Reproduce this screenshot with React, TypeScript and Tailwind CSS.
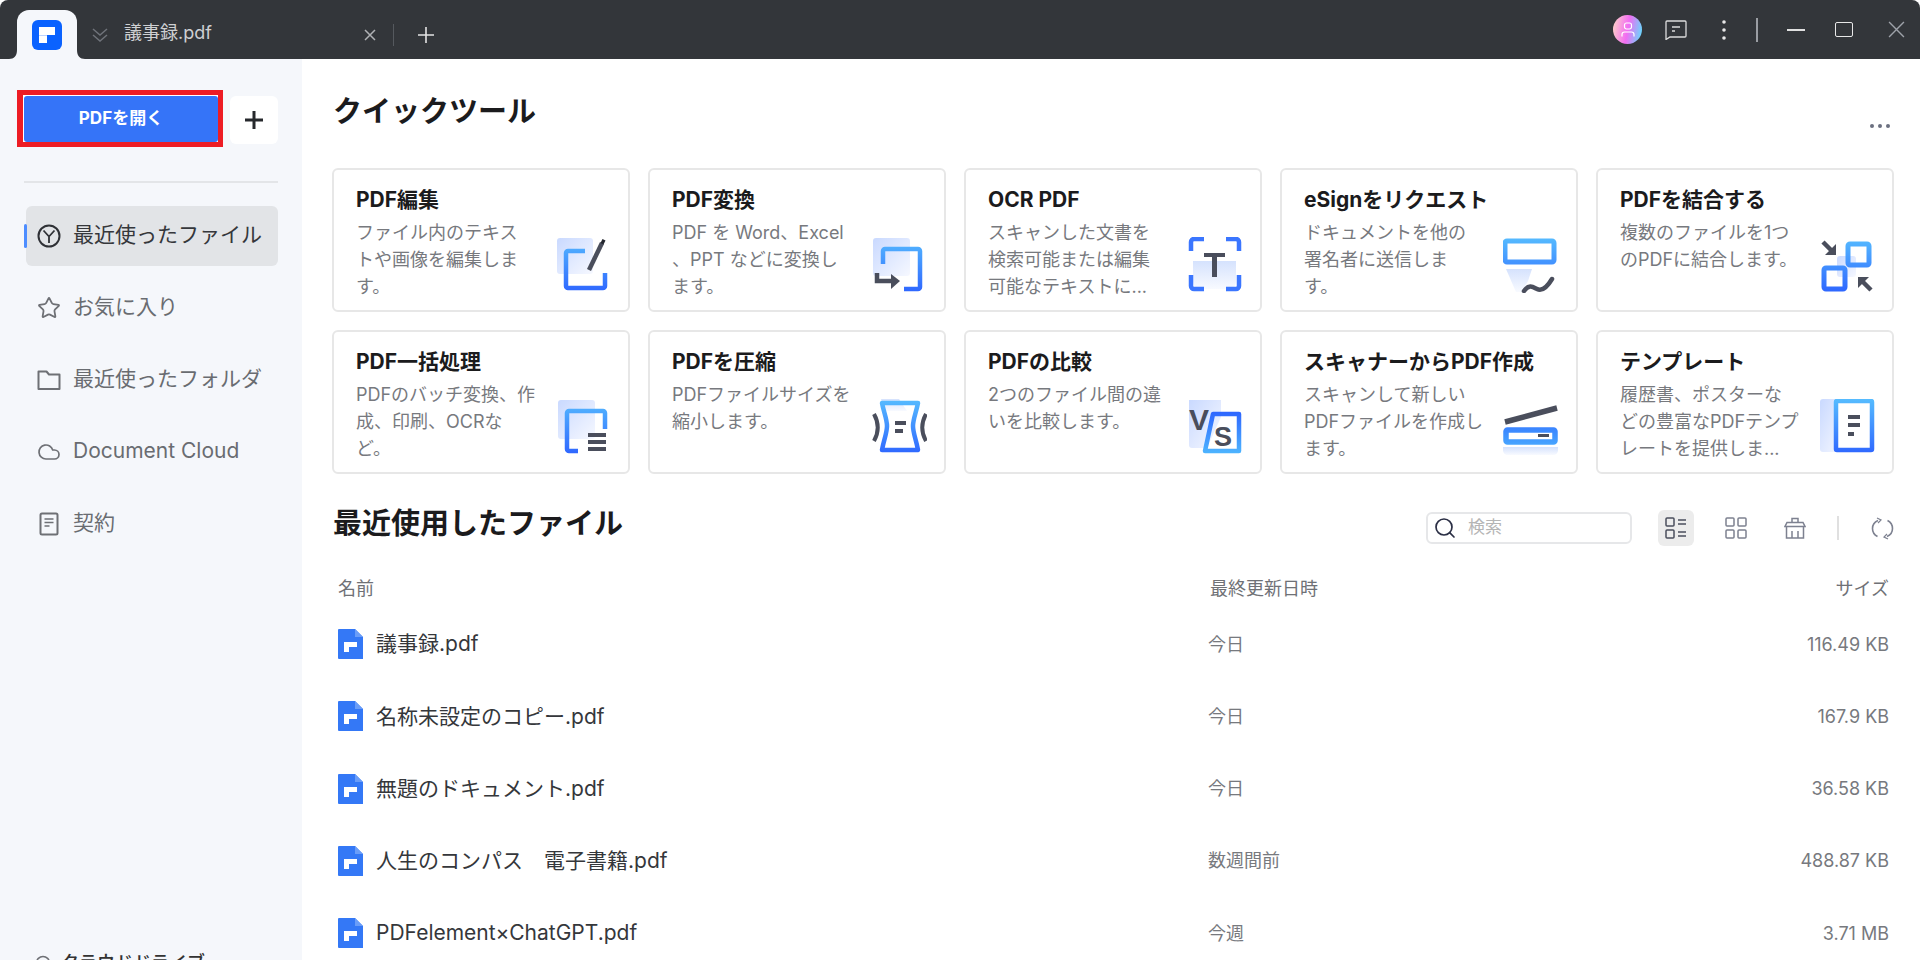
import { Star, Cloud, Search } from 'lucide-react';
import type { ReactNode } from 'react';

// shared gradients for the tool icons
function Defs() {
  return (
    <svg width="0" height="0" className="absolute">
      <defs>
        <linearGradient id="pale" x1="0" y1="0" x2="1" y2="1">
          <stop offset="0" stopColor="#c9d9ff" />
          <stop offset="1" stopColor="#f6f8ff" />
        </linearGradient>
        <linearGradient id="paleDown" x1="0" y1="0" x2="0" y2="1">
          <stop offset="0" stopColor="#d5e2fd" />
          <stop offset="1" stopColor="#f8faff" />
        </linearGradient>
        <linearGradient id="blue" gradientUnits="userSpaceOnUse" x1="0" y1="0" x2="0" y2="54">
          <stop offset="0" stopColor="#56bcff" />
          <stop offset="1" stopColor="#2f68ff" />
        </linearGradient>
        <linearGradient id="blueUp" gradientUnits="userSpaceOnUse" x1="0" y1="54" x2="0" y2="14">
          <stop offset="0" stopColor="#4db4ff" />
          <stop offset="1" stopColor="#2f68ff" />
        </linearGradient>
      </defs>
    </svg>
  );
}

const dark = '#4a4e5c';

const toolIcons: Record<string, ReactNode> = {
  edit: (
    <>
      <rect x="2" y="1" width="36" height="36" rx="3" fill="url(#pale)" />
      <path d="M30 14H13a2 2 0 0 0-2 2v33a2 2 0 0 0 2 2h35a2 2 0 0 0 2-2V36" fill="none" stroke="url(#blue)" strokeWidth="4.500" />
      <path d="M34 33l13-27" stroke={dark} strokeWidth="4.500" />
      <path d="M45.500 6l2-4 3 1.500-2 4z" fill="#23262f" />
    </>
  ),
  convert: (
    <>
      <rect x="2" y="1" width="37" height="38" rx="3" fill="url(#pale)" />
      <path d="M12 27V14a2 2 0 0 1 2-2h33a2 2 0 0 1 2 2v36a2 2 0 0 1-2 2H33" fill="none" stroke="url(#blue)" strokeWidth="4.500" />
      <path d="M6 36v8h17" fill="none" stroke={dark} strokeWidth="4.500" />
      <path d="M20 37l9 7-9 8z" fill={dark} />
    </>
  ),
  ocr: (
    <>
      <path d="M6 24h43v20c0 5-3 8-8 8H14c-5 0-8-3-8-8z" fill="url(#paleDown)" />
      <path d="M17 2H7a3 3 0 0 0-3 3v9M39 2h10a3 3 0 0 1 3 3v9M4 38v11a3 3 0 0 0 3 3h10M52 38v11a3 3 0 0 1-3 3H39" fill="none" stroke="#3b76ff" strokeWidth="4.500" />
      <path d="M17 16h21v4H30v20h-5V20h-8z" fill={dark} />
    </>
  ),
  sign: (
    <>
      <rect x="2" y="4" width="49" height="21" rx="2" fill="none" stroke="url(#blue)" strokeWidth="5" />
      <path d="M3 32h26l-4 12-6 11h-6z" fill="url(#paleDown)" />
      <path d="M21 54c5-7 9-4 13-2s9 0 15-10" fill="none" stroke={dark} strokeWidth="4.500" strokeLinecap="round" />
    </>
  ),
  merge: (
    <>
      <rect x="18" y="19" width="19" height="21" rx="3" fill="url(#pale)" />
      <rect x="29" y="7" width="21" height="21" rx="2" fill="none" stroke="url(#blue)" strokeWidth="5" />
      <rect x="5" y="31" width="21" height="21" rx="2" fill="none" stroke="url(#blue)" strokeWidth="5" />
      <path d="M4 5l11 11" stroke={dark} strokeWidth="4.500" />
      <path d="M6 18h11V7z" fill={dark} />
      <path d="M52 53L41 42" stroke={dark} strokeWidth="4.500" />
      <path d="M39 51V40h11z" fill={dark} />
    </>
  ),
  batch: (
    <>
      <rect x="3" y="1" width="37" height="39" rx="3" fill="url(#pale)" />
      <path d="M50 30V14a2 2 0 0 0-2-2H14a2 2 0 0 0-2 2v36a2 2 0 0 0 2 2h9" fill="none" stroke="url(#blue)" strokeWidth="4.500" />
      <path d="M33 34h18v4H33zM33 41h18v4H33zM33 48h18v4H33z" fill={dark} />
    </>
  ),
  compress: (
    <>
      <path d="M10 0h18l8 12H14z" fill="url(#paleDown)" />
      <path d="M11 4h36c-2 10-5 16-5 23s3 13 5 24H11c2-11 5-17 5-24S13 14 11 4z" fill="none" stroke="url(#blue)" strokeWidth="4.500" strokeLinejoin="round" />
      <path d="M24 22h11v4H24zM24 30h8v4h-8z" fill={dark} />
      <path d="M3 15c5 9 5 18 0 27M55 15c-5 9-5 18 0 27" fill="none" stroke={dark} strokeWidth="4" />
    </>
  ),
  compare: (
    <>
      <path d="M2 1h32v17l-14 31H5a3 3 0 0 1-3-3z" fill="url(#pale)" />
      <path d="M26 15h26v37H18z" fill="none" stroke="url(#blueUp)" strokeWidth="4.500" strokeLinejoin="round" />
      <text x="2" y="31" fontSize="30" fontWeight="700" fill={dark} fontFamily="'Liberation Sans',sans-serif">V</text>
      <text x="27" y="47" fontSize="27" fontWeight="700" fill={dark} fontFamily="'Liberation Sans',sans-serif">S</text>
    </>
  ),
  scanner: (
    <>
      <path d="M2 23l52-14" stroke={dark} strokeWidth="5.500" />
      <rect x="3" y="31" width="49" height="12" rx="1.500" fill="none" stroke="url(#blueUp)" strokeWidth="5.500" />
      <path d="M35 35h11v3H35z" fill={dark} />
      <path d="M0 48h55v3c0 3-2 5-5 5H5c-3 0-5-2-5-5z" fill="url(#paleDown)" />
    </>
  ),
  template: (
    <>
      <rect x="1" y="0" width="22" height="53" rx="3" fill="url(#pale)" />
      <rect x="17" y="2" width="36" height="49" rx="1" fill="#fff" stroke="url(#blue)" strokeWidth="4.500" />
      <path d="M29 16h12v4H29zM29 24h12v4H29zM29 33h6v4h-6z" fill={dark} />
    </>
  ),
};

const tools = [
  { title: 'PDF編集', lines: ['ファイル内のテキス', 'トや画像を編集しま', 'す。'], icon: 'edit' },
  { title: 'PDF変換', lines: ['PDF を Word、Excel', '、PPT などに変換し', 'ます。'], icon: 'convert' },
  { title: 'OCR PDF', lines: ['スキャンした文書を', '検索可能または編集', '可能なテキストに...'], icon: 'ocr' },
  { title: 'eSignをリクエスト', lines: ['ドキュメントを他の', '署名者に送信しま', 'す。'], icon: 'sign' },
  { title: 'PDFを結合する', lines: ['複数のファイルを1つ', 'のPDFに結合します。'], icon: 'merge' },
  { title: 'PDF一括処理', lines: ['PDFのバッチ変換、作', '成、印刷、OCRな', 'ど。'], icon: 'batch' },
  { title: 'PDFを圧縮', lines: ['PDFファイルサイズを', '縮小します。'], icon: 'compress' },
  { title: 'PDFの比較', lines: ['2つのファイル間の違', 'いを比較します。'], icon: 'compare' },
  { title: 'スキャナーからPDF作成', lines: ['スキャンして新しい', 'PDFファイルを作成し', 'ます。'], icon: 'scanner' },
  { title: 'テンプレート', lines: ['履歴書、ポスターな', 'どの豊富なPDFテンプ', 'レートを提供しま...'], icon: 'template' },
];

const files = [
  { name: '議事録.pdf', date: '今日', size: '116.49 KB' },
  { name: '名称未設定のコピー.pdf', date: '今日', size: '167.9 KB' },
  { name: '無題のドキュメント.pdf', date: '今日', size: '36.58 KB' },
  { name: '人生のコンパス　電子書籍.pdf', date: '数週間前', size: '488.87 KB' },
  { name: 'PDFelement×ChatGPT.pdf', date: '今週', size: '3.71 MB' },
];

function RecentIcon() {
  return (
    <svg width="24" height="24" viewBox="0 0 24 24" fill="none" stroke="#2f3136" strokeWidth="2">
      <circle cx="12" cy="12" r="10.500" />
      <path d="M6.500 6.500L12 12.500l5.500-6M12 12.500V19" strokeWidth="1.800" />
    </svg>
  );
}

function FolderIcon() {
  return (
    <svg width="24" height="24" viewBox="0 0 24 24" fill="none" stroke="#6e7075" strokeWidth="2">
      <path d="M1.500 3.500h8l2.500 3h10.500v14.500h-21z" strokeLinejoin="round" />
    </svg>
  );
}

function ContractIcon() {
  return (
    <svg width="24" height="24" viewBox="0 0 24 24" fill="none" stroke="#6e7075" strokeWidth="2">
      <rect x="3.500" y="1.500" width="17" height="21" rx="1.500" />
      <path d="M7.500 7h9M7.500 10.500h9M7.500 14h5" strokeWidth="1.300" />
    </svg>
  );
}

function FileIcon() {
  return (
    <svg width="25" height="30" viewBox="0 0 25 30" className="shrink-0">
      <path d="M1 0h16l8 8v22H1a1 1 0 0 1-1-1V1a1 1 0 0 1 1-1z" fill="#3478f6" />
      <path d="M17 0l8 8h-8z" fill="#6a9df8" />
      <path d="M6 13h13v5h-8v5H6z" fill="#fff" />
    </svg>
  );
}

function Sidebar() {
  const items = [
    { label: '最近使ったファイル', icon: <RecentIcon />, active: true },
    { label: 'お気に入り', icon: <Star size={26} strokeWidth={1.800} color="#6e7075" /> },
    { label: '最近使ったフォルダ', icon: <FolderIcon /> },
    { label: 'Document Cloud', icon: <Cloud size={28} strokeWidth={1.700} color="#6e7075" /> },
    { label: '契約', icon: <ContractIcon /> },
  ];
  return (
    <aside className="flex h-full w-[302px] shrink-0 flex-col bg-[#f5f7fb] pt-[31px]">
      <div className="flex items-start gap-[7px] pl-[17px]">
        <div className="h-[57px] w-[206px] border-[5px] border-l-[6px] border-[#ed1c24] bg-white pl-px pt-px">
          <button className="flex h-[46px] w-[194px] items-center justify-center rounded-[3px] bg-[#3574f8] text-[17px] font-bold text-white">
            PDFを開く
          </button>
        </div>
        <button className="mt-[6px] flex h-[48px] w-[48px] items-center justify-center rounded-md bg-white">
          <svg width="18" height="18" viewBox="0 0 18 18" stroke="#26282c" strokeWidth="3">
            <path d="M9 0v18M0 9h18" />
          </svg>
        </button>
      </div>
      <div className="ml-[24px] mt-[34px] h-[2px] w-[254px] bg-[#e3e5e8]" />
      <nav className="relative mt-[23px] flex flex-col gap-[12px] pl-[26px]">
        {items.map((item) => (
          <div
            key={item.label}
            className={`relative flex h-[60px] w-[252px] items-center gap-[12px] rounded-md pl-[11px] text-[21px] ${
              item.active ? 'bg-[#e2e4e7] text-[#35373b]' : 'text-[#696c71]'
            }`}
          >
            {item.active && <span className="absolute left-[-2px] top-[18px] h-[24px] w-[3px] rounded-sm bg-[#4d8dff]" />}
            <span className="flex w-[24px] items-center justify-center">{item.icon}</span>
            <span className="whitespace-nowrap pb-[2px]">{item.label}</span>
          </div>
        ))}
      </nav>
      <div className="mb-[-16px] mt-auto flex items-center gap-[10px] pl-[35px] text-[18px] font-medium text-[#333]">
        <svg width="16" height="16" viewBox="0 0 16 16" fill="none" stroke="#6e7075" strokeWidth="1.500" className="shrink-0">
          <circle cx="8" cy="8" r="6.500" />
        </svg>
        <span>クラウドドライブ</span>
      </div>
    </aside>
  );
}

function TitleBar() {
  return (
    <header className="relative flex h-[59px] shrink-0 items-start rounded-t-[8px] bg-[#33363a] text-[#e6e6e6]">
      <div className="relative ml-[17px] mt-[10px] flex h-[49px] w-[60px] justify-center rounded-t-[12px] bg-[#f5f7fb] pt-[10px]">
        <svg width="8" height="9" viewBox="0 0 8 9" className="absolute bottom-0 left-[-8px]">
          <path d="M8 0v9H0c5 0 8-3 8-9z" fill="#f5f7fb" />
        </svg>
        <svg width="8" height="9" viewBox="0 0 8 9" className="absolute bottom-0 right-[-8px]">
          <path d="M0 0v9h8C3 9 0 6 0 0z" fill="#f5f7fb" />
        </svg>
        <svg width="30" height="30" viewBox="0 0 30 30">
          <rect width="30" height="30" rx="6" fill="#0a62ff" />
          <path d="M7 7h16v8H15v1H7z" fill="#fff" />
          <path d="M7 15h8v1H7z" fill="#bcd3ff" />
          <path d="M7 16h8v7H7z" fill="#fff" />
        </svg>
      </div>
      <svg width="16" height="16" viewBox="0 0 16 16" fill="none" stroke="#6f737a" strokeWidth="1.500" className="ml-[15px] mt-[27px]">
        <path d="M1 2l7 6 7-6M1 8l7 6 7-6" />
      </svg>
      <span className="ml-[16px] mt-[20px] w-[240px] text-[18px] leading-[26px] text-[#cfd0d2]">議事録.pdf</span>
      <svg width="12" height="12" viewBox="0 0 12 12" stroke="#b0b2b5" strokeWidth="1.500" className="mt-[29px]">
        <path d="M1 1l10 10M11 1L1 11" />
      </svg>
      <span className="ml-[17px] mt-[24px] h-[22px] w-px bg-[#55595e]" />
      <svg width="16" height="16" viewBox="0 0 16 16" stroke="#e4e4e4" strokeWidth="1.600" className="ml-[24px] mt-[27px]">
        <path d="M8 0v16M0 8h16" />
      </svg>

      <div className="ml-auto flex h-full items-center pr-[15px]">
        <span className="flex h-[29px] w-[29px] items-center justify-center rounded-full bg-[linear-gradient(100deg,#ffd9c4_0%,#f26cf2_50%,#55e6ff_100%)]">
          <svg width="14" height="15" viewBox="0 0 14 15" fill="none" stroke="#fff" strokeWidth="1.200">
            <rect x="3.500" y="1" width="7" height="6" rx="2" />
            <path d="M1 14.500v-2c0-1.500 1-2.500 2.500-2.500h7c1.500 0 2.500 1 2.500 2.500v2" />
          </svg>
        </span>
        <svg width="22" height="20" viewBox="0 0 22 20" fill="none" stroke="#dcdcdc" strokeWidth="1.300" className="ml-[23px]">
          <path d="M2 1h18a1 1 0 0 1 1 1v14a1 1 0 0 1-1 1H5l-4 2.500V2a1 1 0 0 1 1-1z" />
          <path d="M7 7h8M7 11h3" strokeWidth="1.500" />
        </svg>
        <svg width="6" height="22" viewBox="0 0 6 22" fill="#e8e8e8" className="ml-[34px]">
          <circle cx="3" cy="3" r="1.800" />
          <circle cx="3" cy="11" r="1.800" />
          <circle cx="3" cy="19" r="1.800" />
        </svg>
        <span className="ml-[29px] h-[24px] w-[2px] bg-[#9a9da3]" />
        <span className="ml-[29px] h-[2px] w-[18px] bg-[#e0e0e0]" />
        <span className="ml-[30px] h-[15px] w-[18px] rounded-[2px] border-[1.500px] border-[#e8e8e8]" />
        <svg width="17" height="17" viewBox="0 0 16 16" stroke="#9ea2a9" strokeWidth="1.300" className="ml-[35px]">
          <path d="M1 1l14 14M15 1L1 15" />
        </svg>
      </div>
    </header>
  );
}

function ToolCard({ tool }: { tool: (typeof tools)[number] }) {
  return (
    <div className="flex h-[144px] justify-between rounded-[6px] border-2 border-[#e7e7e7] bg-white pb-[17px] pl-[22px] pr-[17px] pt-[16px]">
      <div className="min-w-0">
        <h3 className="h-[28px] whitespace-nowrap text-[21px] font-bold leading-[28px] text-[#1b1b1d]">{tool.title}</h3>
        <div className="mt-[5px] text-[18px] leading-[27px] text-[#77797e]">
          {tool.lines.map((line) => (
            <p key={line} className="whitespace-nowrap">{line}</p>
          ))}
        </div>
      </div>
      <svg width="56" height="56" viewBox="0 0 56 56" className="shrink-0 self-end">
        {toolIcons[tool.icon]}
      </svg>
    </div>
  );
}

function Toolbar() {
  return (
    <div className="flex items-center">
      <div className="flex h-[32px] w-[206px] items-center gap-[11px] rounded-md border-2 border-[#e6e7e9] pl-[5px] text-[17px] text-[#b5b5b5]">
        <Search size={24} strokeWidth={1.700} color="#2b2f45" />
        <span>検索</span>
      </div>
      <span className="ml-[26px] flex h-[36px] w-[36px] items-center justify-center rounded-md bg-[#ececec]">
        <svg width="22" height="22" viewBox="0 0 22 22" fill="none" stroke="#4a4e5c" strokeWidth="1.500">
          <rect x="1" y="1" width="8" height="8" rx="1" />
          <rect x="1" y="13" width="8" height="8" rx="1" />
          <path d="M13 3h8M13 7h8M13 15h8M13 19h8" />
        </svg>
      </span>
      <svg width="22" height="22" viewBox="0 0 22 22" fill="none" stroke="#7d8190" strokeWidth="1.500" className="ml-[31px]">
        <rect x="1" y="1" width="8" height="8" rx="1" />
        <rect x="13" y="1" width="8" height="8" rx="1" />
        <rect x="1" y="13" width="8" height="8" rx="1" />
        <rect x="13" y="13" width="8" height="8" rx="1" />
      </svg>
      <svg width="22" height="22" viewBox="0 0 22 22" fill="none" stroke="#7d8190" strokeWidth="1.500" className="ml-[37px]">
        <path d="M8 5V1.500h6V5M3 5.500h16l2 4H1zM2.500 9.500V21h17V9.500M8 14v7M14 14v7" />
      </svg>
      <span className="ml-[31px] h-[24px] w-[2px] bg-[#e0e0e0]" />
      <svg width="23" height="23" viewBox="0 0 23 23" fill="none" stroke="#7d8190" strokeWidth="1.600" className="ml-[32px]">
        <path d="M7 3.500C3.500 5 1.500 8 1.500 11.500c0 3.500 2 6.500 5 8M16 19.500c3.500-1.500 5.500-4.500 5.500-8 0-3.500-2-6.500-5-8" />
        <path d="M6 1l4 2-3 3M17 22l-4-2 3-3" strokeWidth="1.200" />
      </svg>
    </div>
  );
}

export default function App() {
  return (
    <div className="flex h-[960px] w-[1920px] flex-col overflow-hidden bg-white [font-family:Inter,'Noto_Sans_CJK_JP',sans-serif]">
      <Defs />
      <TitleBar />
      <div className="flex min-h-0 flex-1">
        <Sidebar />
        <main className="min-w-0 flex-1 pl-[30px] pr-[26px] pt-[33px]">
          <div className="flex h-[40px] items-center justify-between">
            <h1 className="pl-px text-[29px] font-bold text-[#1b1b1d]">クイックツール</h1>
            <div className="mr-[4px] mt-[28px] flex gap-[4px]">
              <span className="h-[4px] w-[4px] rounded-full bg-[#6b7080]" />
              <span className="h-[4px] w-[4px] rounded-full bg-[#6b7080]" />
              <span className="h-[4px] w-[4px] rounded-full bg-[#6b7080]" />
            </div>
          </div>

          <div className="mt-[36px] grid grid-cols-5 gap-[18px]">
            {tools.map((tool) => (
              <ToolCard key={tool.title} tool={tool} />
            ))}
          </div>

          <div className="mt-[34px] flex h-[40px] items-center justify-between">
            <h2 className="mb-[8px] pl-px text-[29px] font-bold text-[#1b1b1d]">最近使用したファイル</h2>
            <Toolbar />
          </div>

          <div className="mt-[25px] grid h-[30px] grid-cols-[870px_1fr_auto] items-center pl-[6px] pr-[5px] text-[18px] text-[#6f7176]">
            <span>名前</span>
            <span className="pl-[2px]">最終更新日時</span>
            <span>サイズ</span>
          </div>

          <div className="mt-[5px]">
            {files.map((file) => (
              <div key={file.name} className="grid h-[72.250px] grid-cols-[870px_1fr_auto] items-center pl-[6px] pr-[5px]">
                <div className="flex items-center gap-[13px] text-[21px] text-[#35373b]">
                  <FileIcon />
                  <span className="whitespace-nowrap">{file.name}</span>
                </div>
                <span className="text-[18px] text-[#77797e]">{file.date}</span>
                <span className="text-[18px] text-[#77797e]">{file.size}</span>
              </div>
            ))}
          </div>
        </main>
      </div>
    </div>
  );
}
